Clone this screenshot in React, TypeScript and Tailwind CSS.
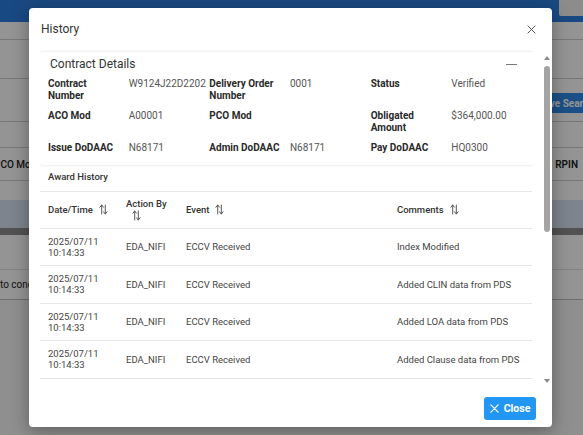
import React from "react";

const SortIcon: React.FC<{ className?: string }> = ({ className = "" }) => (
  <svg
    viewBox="0 0 10 12"
    className={`w-[9px] h-[11px] align-middle ${className}`}
    fill="none"
    stroke="#555"
    strokeWidth="1.1"
    strokeLinecap="round"
    strokeLinejoin="round"
  >
    <path d="M3 11V1M1 3.5L3 1L5 3.5" />
    <path d="M7 1V11M5 8.5L7 11L9 8.5" />
  </svg>
);

const details = [
  ["Contract Number", "W9124J22D2202", "Delivery Order Number", "0001", "Status", "Verified"],
  ["ACO Mod", "A00001", "PCO Mod", "", "Obligated Amount", "$364,000.00"],
  ["Issue DoDAAC", "N68171", "Admin DoDAAC", "N68171", "Pay DoDAAC", "HQ0300"],
];

const rows = [
  "Index Modified",
  "Added CLIN data from PDS",
  "Added LOA data from PDS",
  "Added Clause data from PDS",
];

const BackgroundPage: React.FC = () => (
  <div className="flex flex-col w-full h-full text-[10px] text-[#222]">
    <div className="h-[22px] bg-[#2c7fe0] flex justify-end items-start shrink-0">
      <div className="w-[24px] h-[16px] bg-[#f2f2f2] rounded-bl-[2px]" />
    </div>
    <div className="h-[18px] border-b border-[#cfcfcf] shrink-0" />
    <div className="h-[39px] border-b border-[#cfcfcf] shrink-0" />
    <div className="h-[43px] border-b border-[#cfcfcf] flex justify-end items-start pt-[14px] overflow-hidden shrink-0">
      <div className="h-[20px] px-2 bg-[#2f8ae8] text-white font-bold flex items-center whitespace-nowrap -mr-[19px] rounded-[2px]">
        Save Search
      </div>
    </div>
    <div className="h-[26px] border-b border-[#cfcfcf] shrink-0" />
    <div className="h-[33px] border-b border-[#cfcfcf] flex justify-between items-center font-medium overflow-hidden shrink-0">
      <span className="-ml-[6px] whitespace-nowrap">PCO Mod</span>
      <span className="mr-[5px] font-semibold">RPIN</span>
    </div>
    <div className="h-[19px] shrink-0" />
    <div className="h-[28px] bg-[#d8e4f3] shrink-0" />
    <div className="h-[7px] bg-[#8e8e8e] shrink-0" />
    <div className="h-[35px] border-b border-[#e2e2e2] shrink-0" />
    <div className="h-[30px] border-b border-[#bdbdbd] flex items-center shrink-0">
      <span className="whitespace-nowrap">to conclude the search</span>
    </div>
    <div className="flex-1 bg-[#f6f6f6]" />
  </div>
);

const App: React.FC = () => {
  return (
    <div
      className="relative w-[583px] h-[435px] overflow-hidden bg-white"
      style={{ fontFamily: "Roboto, 'Liberation Sans', sans-serif" }}
    >
      <BackgroundPage />
      <div className="absolute inset-0 bg-black/[0.42]" />

      <div className="absolute left-[29px] top-[8px] w-[523px] h-[419px] bg-white rounded-[4px] shadow-[0_4px_18px_rgba(0,0,0,0.35)] flex flex-col">
        <div className="h-[42px] shrink-0 flex items-center justify-between pl-[12px] pr-[16px]">
          <h2 className="text-[12px] text-[#333] leading-none">History</h2>
          <svg viewBox="0 0 10 10" className="w-[9px] h-[9px]" stroke="#555" strokeWidth="1.1" strokeLinecap="round">
            <path d="M1 1L9 9M9 1L1 9" />
          </svg>
        </div>

        <div className="flex-1 flex min-h-0 pl-[11px] pr-[2px]">
          <div className="flex-1 overflow-hidden min-w-0">
            <div className="mt-[2px] rounded-[2px] shadow-[0_0_3px_rgba(0,0,0,0.16)] pl-2 pt-[4px] pb-[11px]">
              <div className="flex items-center justify-between h-[16px] pl-[2px] pr-[15px]">
                <span className="text-[12px] text-[#333]">Contract Details</span>
                <span className="w-[11px] h-[1px] bg-[#777]" />
              </div>
              <div className="grid grid-cols-6 gap-y-[9px] mt-[6px] text-[10px] leading-[11.5px]">
                {details.map((r, i) => (
                  <React.Fragment key={i}>
                    {r.map((c, j) => (
                      <div
                        key={j}
                        className={j % 2 === 0 ? "font-bold text-[#2a2a2a] pr-1" : "text-[#555]"}
                      >
                        {c}
                      </div>
                    ))}
                  </React.Fragment>
                ))}
              </div>
            </div>

            <div className="h-[27px] flex items-center pl-2 border-b border-[#e6e6e6] text-[9.5px] text-[#333] font-medium">
              Award History
            </div>

            <div className="text-[9.5px]">
              <div className="h-[37px] flex items-center border-b border-[#e6e6e6] text-[#333] font-medium leading-[12px]">
                <div className="w-[78px] pl-2 whitespace-nowrap">
                  Date/Time<SortIcon className="inline-block ml-[6px]" />
                </div>
                <div className="w-[60px] pl-2 pr-1">
                  Action By<SortIcon className="inline-block ml-[6px]" />
                </div>
                <div className="w-[211px] pl-2">
                  Event<SortIcon className="inline-block ml-[6px]" />
                </div>
                <div className="flex-1 pl-2">
                  Comments<SortIcon className="inline-block ml-[6px]" />
                </div>
              </div>
              {rows.map((c, i) => (
                <div key={i} className="h-[37.5px] flex items-center border-b border-[#e6e6e6] text-[#444] leading-[11px]">
                  <div className="w-[78px] pl-2">
                    2025/07/11
                    <br />
                    10:14:33
                  </div>
                  <div className="w-[60px] pl-2">EDA_NIFI</div>
                  <div className="w-[211px] pl-2">ECCV Received</div>
                  <div className="flex-1 pl-2">{c}</div>
                </div>
              ))}
            </div>
          </div>

          <div className="w-[7px] ml-[11px] flex flex-col items-center pt-[6px] pb-[5px]">
            <svg viewBox="0 0 6 4" className="w-[6px] h-[4px]" fill="#8a8a8a">
              <path d="M0 4L3 0L6 4Z" />
            </svg>
            <div className="mt-[6px] w-[6px] h-[166px] rounded-full bg-[#a4a4a4]" />
            <div className="flex-1" />
            <svg viewBox="0 0 6 4" className="w-[6px] h-[4px]" fill="#8a8a8a">
              <path d="M0 0L3 4L6 0Z" />
            </svg>
          </div>
        </div>

        <div className="h-[39px] shrink-0 flex justify-end items-start pt-[9px] pr-[16px]">
          <button className="h-[23px] w-[52px] bg-[#2196f3] rounded-[3px] text-white text-[10.5px] font-bold flex items-center justify-center gap-[5px]">
            <svg viewBox="0 0 10 10" className="w-[9px] h-[9px]" stroke="white" strokeWidth="1.4" strokeLinecap="round">
              <path d="M1 1L9 9M9 1L1 9" />
            </svg>
            Close
          </button>
        </div>
      </div>
    </div>
  );
};

export default App;
